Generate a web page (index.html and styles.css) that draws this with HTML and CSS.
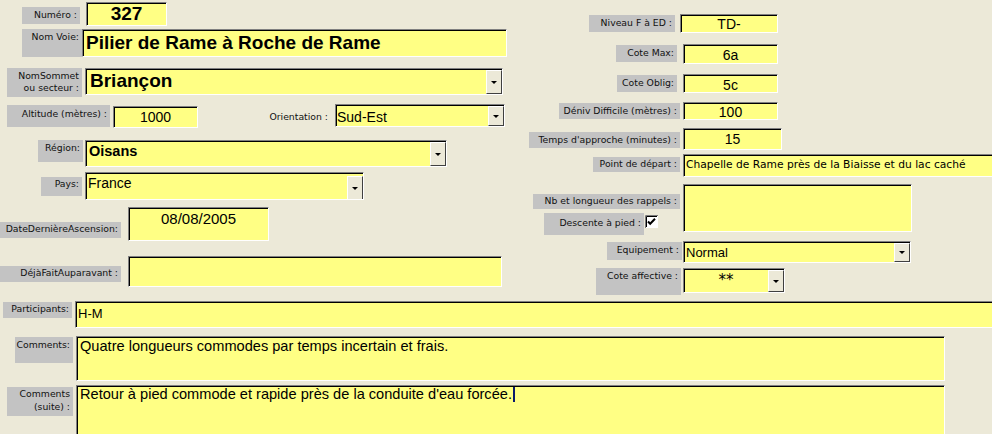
FILE: index.html
```html
<!DOCTYPE html>
<html lang="fr">
<head>
  <meta charset="UTF-8">
  <title>Fiche voie</title>
  <link rel="stylesheet" href="styles.css">
</head>
<body>
  <div class="form">
    <div class="top">
      <!-- colonne gauche -->
      <div class="col-left">
        <div class="row r-numero">
          <span class="lbl lbl-numero">Numéro :</span>
          <span class="fld fld-numero">327</span>
        </div>
        <div class="row r-voie">
          <span class="lbl lbl-voie">Nom Voie:</span>
          <span class="fld fld-voie">Pilier de Rame à Roche de Rame</span>
        </div>
        <div class="row r-sommet">
          <span class="lbl lbl-sommet">NomSommet<br>ou secteur :</span>
          <span class="fld combo fld-sommet"><span class="val">Briançon</span><span class="drop"></span></span>
        </div>
        <div class="row r-alt">
          <span class="lbl lbl-alt">Altitude (mètres) :</span>
          <span class="fld fld-alt">1000</span>
          <span class="txt lbl-orient">Orientation :</span>
          <span class="fld combo fld-orient"><span class="val">Sud-Est</span><span class="drop"></span></span>
        </div>
        <div class="row r-region">
          <span class="lbl lbl-region">Région:</span>
          <span class="fld combo fld-region"><span class="val">Oisans</span><span class="drop"></span></span>
        </div>
        <div class="row r-pays">
          <span class="lbl lbl-pays">Pays:</span>
          <span class="fld combo fld-pays"><span class="val">France</span><span class="drop"></span></span>
        </div>
        <div class="row r-date">
          <span class="lbl lbl-date">DateDernièreAscension:</span>
          <span class="fld fld-date">08/08/2005</span>
        </div>
        <div class="row r-deja">
          <span class="lbl lbl-deja">DéjàFaitAuparavant :</span>
          <span class="fld fld-deja"></span>
        </div>
      </div>

      <!-- colonne droite -->
      <div class="col-right">
        <div class="row r-niveau">
          <span class="lbl lbl-niveau">Niveau F à ED :</span>
          <span class="fld fld-small fld-niveau">TD-</span>
        </div>
        <div class="row r-max">
          <span class="lbl lbl-max">Cote Max:</span>
          <span class="fld fld-small fld-max">6a</span>
        </div>
        <div class="row r-oblig">
          <span class="lbl lbl-oblig">Cote Oblig:</span>
          <span class="fld fld-small fld-oblig">5c</span>
        </div>
        <div class="row r-deniv">
          <span class="lbl lbl-deniv">Déniv Difficile (mètres) :</span>
          <span class="fld fld-small fld-deniv">100</span>
        </div>
        <div class="row r-temps">
          <span class="lbl lbl-temps">Temps d'approche (minutes) :</span>
          <span class="fld fld-small fld-temps">15</span>
        </div>
        <div class="row r-depart">
          <span class="lbl lbl-depart">Point de départ :</span>
          <span class="fld fld-depart">Chapelle de Rame près de la Biaisse et du lac caché</span>
        </div>
        <div class="row r-rappels">
          <div class="stack">
            <span class="lbl lbl-rappels">Nb et longueur des rappels :</span>
            <div class="descente">
              <span class="lbl lbl-descente">Descente à pied :</span>
              <svg class="check" width="13" height="13" viewBox="0 0 13 13">
                <rect x="0" y="0" width="13" height="13" fill="#fff"/>
                <path d="M0.5 13V0.5H13" fill="none" stroke="#7a7a7a" stroke-width="1"/>
                <path d="M1.5 12V1.5H12" fill="none" stroke="#000" stroke-width="1"/>
                <path d="M3 6.5l2.2 2.3 4.8-5" fill="none" stroke="#000" stroke-width="2"/>
              </svg>
            </div>
          </div>
          <span class="fld fld-rappels"></span>
        </div>
        <div class="row r-equip">
          <span class="lbl lbl-equip">Equipement :</span>
          <span class="fld combo fld-equip"><span class="val">Normal</span><span class="drop"></span></span>
        </div>
        <div class="row r-affect">
          <span class="lbl lbl-affect">Cote affective :</span>
          <span class="fld combo fld-affect"><span class="val">**</span><span class="drop"></span></span>
        </div>
      </div>
    </div>

    <!-- bas du formulaire -->
    <div class="bottom">
      <div class="row r-part">
        <span class="lbl lbl-part">Participants:</span>
        <span class="fld fld-part">H-M</span>
      </div>
      <div class="row r-comm">
        <span class="lbl lbl-comm">Comments:</span>
        <span class="fld fld-comm">Quatre longueurs commodes par temps incertain et frais.</span>
      </div>
      <div class="row r-suite">
        <span class="lbl lbl-suite">Comments<br>(suite) :</span>
        <span class="fld fld-suite">Retour à pied commode et rapide près de la conduite d'eau forcée.<span class="caret"></span></span>
      </div>
    </div>
  </div>
</body>
</html>
```

FILE: styles.css
```css
html, body {
  margin: 0;
  padding: 0;
}
body {
  width: 992px;
  height: 434px;
  overflow: hidden;
  background-color: #ece9d8;
  font-family: "DejaVu Sans", sans-serif;
  color: #000;
}
.top {
  display: flex;
  align-items: flex-start;
}
.col-left {
  flex: none;
  width: 520px;
}
.col-right {
  flex: none;
  width: 472px;
}
.row {
  display: flex;
  align-items: flex-start;
}

/* etiquettes grises */
.lbl {
  flex: none;
  box-sizing: border-box;
  background-color: #c3c3c3;
  color: #111;
  text-align: right;
  font-size: 9.3px;
  line-height: 12px;
  padding: 1px 3px 0 0;
  white-space: nowrap;
}
.txt {
  flex: none;
  color: #111;
  font-size: 9.3px;
  line-height: 12px;
  text-align: right;
}

/* champs jaunes */
.fld {
  flex: none;
  box-sizing: border-box;
  background-color: #ffff84;
  border: 1px solid;
  border-color: #808080 #fff #fff #808080;
  box-shadow: inset 1px 1px 0 #000;
  font-family: "Liberation Sans", Arial, sans-serif;
  font-size: 14px;
  line-height: 16px;
  padding: 2px 0 0 4px;
  white-space: nowrap;
  overflow: hidden;
}
.combo {
  display: flex;
  padding: 0;
}
.combo .val {
  flex: 1;
  padding-left: 4px;
}
.drop {
  flex: none;
  width: 16px;
  box-sizing: border-box;
  background-color: #ece9d8;
  border: 1px solid;
  border-color: #fff #404040 #404040 #fff;
  margin: 1px 0 0 0;
  display: flex;
  align-items: center;
  justify-content: center;
}
.drop::after {
  content: "";
  border-left: 3px solid transparent;
  border-right: 3px solid transparent;
  border-top: 3px solid #000;
}

/* colonne gauche */
.r-numero { margin-top: 2px; }
.lbl-numero { margin: 5px 0 0 22px; width: 58px; height: 17px; padding-top: 2px; }
.fld-numero { margin-left: 6px; width: 81px; height: 24px; text-align: center; font-weight: bold; font-size: 19px; line-height: 20px; padding: 1px 0 0 0; }

.r-voie { margin-top: 3px; }
.lbl-voie { margin-left: 22px; width: 60px; height: 28px; padding-top: 2px; }
.fld-voie { width: 425px; height: 28px; font-weight: bold; font-size: 19px; line-height: 22px; padding: 2px 0 0 3px; }

.r-sommet { margin-top: 11px; }
.lbl-sommet { margin-left: 7px; width: 75px; height: 29px; padding-top: 2px; }
.fld-sommet { margin-left: 3px; width: 418px; height: 27px; font-weight: bold; font-size: 19px; line-height: 22px; }
.fld-sommet .val { padding-top: 1px; }

.r-alt { margin-top: 7px; }
.lbl-alt { margin: 1px 0 0 7px; width: 103px; height: 22px; padding-top: 3px; }
.fld-alt { margin: 2px 0 0 3px; width: 85px; height: 22px; text-align: center; padding: 2px 0 0 0; }
.lbl-orient { width: 130px; padding-top: 7px; }
.fld-orient { margin-left: 7px; width: 170px; height: 23px; }
.fld-orient .val { padding: 4px 0 0 1px; }

.r-region { margin-top: 12px; }
.lbl-region { margin-left: 38px; width: 45px; height: 22px; padding-top: 2px; }
.fld-region { margin-left: 2px; width: 362px; height: 27px; font-weight: bold; font-size: 14.5px; }
.fld-region .val { padding: 2px 0 0 3px; }

.r-pays { margin-top: 5px; }
.lbl-pays { margin: 5px 0 0 41px; width: 41px; height: 19px; padding-top: 1px; }
.fld-pays { margin-left: 3px; width: 279px; height: 28px; }
.fld-pays .val { padding: 2px 0 0 2px; }
.fld-pays .drop { height: 24px; align-self: flex-start; margin-top: 3px; }

.r-date { margin-top: 7px; }
.lbl-date { margin-top: 15px; width: 121px; height: 16px; padding-top: 1px; }
.fld-date { margin-left: 7px; width: 141px; height: 34px; text-align: center; font-size: 15px; padding: 3px 0 0 0; }

.r-deja { margin-top: 15px; }
.lbl-deja { margin-top: 10px; width: 121px; height: 16px; padding-top: 1px; }
.fld-deja { margin-left: 7px; width: 374px; height: 31px; }

/* colonne droite */
.fld-small { text-align: center; padding: 2px 0 0 0; }

.r-niveau { margin-top: 14px; }
.lbl-niveau { margin: 1px 0 0 69px; width: 86px; height: 17px; padding-top: 2px; }
.fld-niveau { margin-left: 5px; width: 98px; height: 19px; padding-top: 1px; }

.r-max { margin-top: 11px; }
.lbl-max { margin: 1px 0 0 96px; width: 61px; height: 17px; padding-top: 2px; }
.fld-max { margin-left: 6px; width: 95px; height: 20px; }

.r-oblig { margin-top: 10px; }
.lbl-oblig { margin: 1px 0 0 97px; width: 60px; height: 17px; padding-top: 2px; }
.fld-oblig { margin-left: 6px; width: 95px; height: 19px; }

.r-deniv { margin-top: 9px; }
.lbl-deniv { margin: 1px 0 0 39px; width: 121px; height: 16px; padding-top: 2px; }
.fld-deniv { margin-left: 3px; width: 95px; height: 18px; padding-top: 1px; }

.r-temps { margin-top: 8px; }
.lbl-temps { margin: 4px 0 0 9px; width: 151px; height: 16px; padding-top: 2px; }
.fld-temps { margin-left: 3px; width: 99px; height: 22px; }

.r-depart { margin-top: 4px; }
.lbl-depart { margin: 3px 0 0 73px; width: 87px; height: 15px; padding-top: 1px; }
.fld-depart { margin-left: 3px; width: 320px; height: 23px; font-family: "DejaVu Sans", sans-serif; font-size: 10.7px; line-height: 14px; padding: 3px 0 0 2px; }

.r-rappels { margin-top: 7px; }
.stack {
  flex: none;
  width: 160px;
}
.lbl-rappels { display: block; margin: 10px 0 0 13px; width: 147px; height: 15px; padding-top: 1px; }
.descente {
  display: flex;
  align-items: flex-start;
  margin: 4px 0 0 24px;
}
.lbl-descente { width: 100px; height: 22px; padding-top: 4px; }
.check { flex: none; margin: 2px 0 0 1px; }
.fld-rappels { margin-left: 3px; width: 229px; height: 48px; }

.r-equip { margin-top: 6px; }
.lbl-equip { margin: 1px 0 0 87px; width: 75px; height: 18px; padding-top: 2px; }
.fld-equip { margin-left: 1px; width: 228px; height: 22px; font-size: 13px; }
.fld-equip .val { padding: 3px 0 0 2px; }

.r-affect { margin-top: 5px; }
.lbl-affect { margin-left: 76px; width: 85px; height: 27px; padding-top: 2px; }
.fld-affect { margin-left: 2px; width: 102px; height: 25px; font-family: "DejaVu Sans", sans-serif; font-size: 15px; }
.fld-affect .val { text-align: center; padding: 3px 0 0 0; }

/* bas */
.bottom { margin-top: 6px; }
.lbl-part { margin: 1px 0 0 3px; width: 69px; height: 16px; padding-top: 1px; }
.fld-part { margin-left: 3px; width: 920px; height: 27px; font-size: 13px; padding: 4px 0 0 2px; }

.r-comm { margin-top: 8px; }
.lbl-comm { margin: 1px 0 0 15px; width: 58px; height: 26px; padding-top: 2px; }
.fld-comm { margin-left: 3px; width: 869px; height: 45px; font-size: 14.6px; padding: 1px 0 0 3px; }

.r-suite { margin-top: 4px; }
.lbl-suite { margin: 2px 0 0 7px; width: 66px; height: 29px; padding-top: 0; line-height: 13px; }
.fld-suite { margin-left: 3px; width: 869px; height: 55px; font-size: 14.6px; padding: 0 0 0 3px; }
.caret {
  display: inline-block;
  width: 2px;
  height: 15px;
  margin-left: 1px;
  vertical-align: -3px;
  background-color: #0a1a6a;
}
```
